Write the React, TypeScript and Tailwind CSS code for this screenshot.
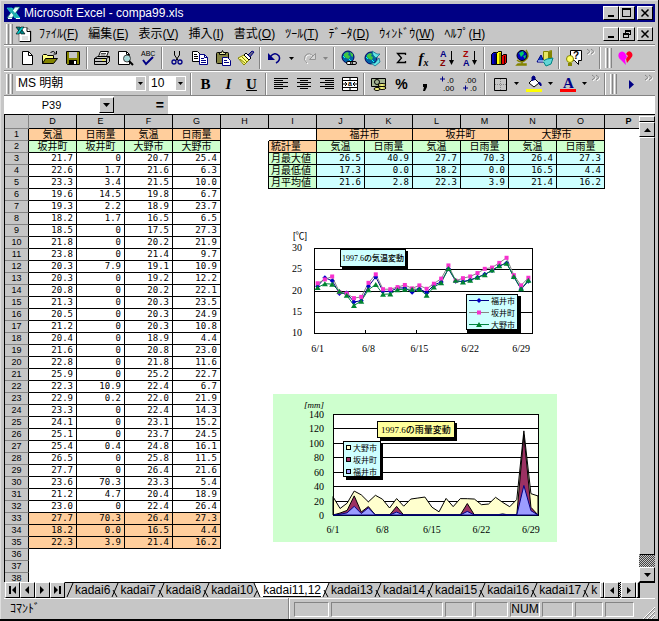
import type { ReactNode } from 'react';
import clsx from 'clsx';

const UI_FONT = "font-['Liberation_Sans','Noto_Sans_CJK_JP',sans-serif]";
const CELL_FONT = "font-['DejaVu_Sans_Mono','Noto_Sans_CJK_JP',monospace]";

const RAISED =
  'border border-t-white border-l-white border-r-black border-b-black bg-[#c6c6c6]';
const SUNKEN =
  'border border-t-[#848484] border-l-[#848484] border-r-white border-b-white';

/* ---------- data ---------- */

const COLUMNS = ['D', 'E', 'F', 'G', 'H', 'I', 'J', 'K', 'L', 'M', 'N', 'O', 'P'];

const DAILY: [string, string, string, string][] = [
  ['21.7', '0', '20.7', '25.4'],
  ['22.6', '1.7', '21.6', '6.3'],
  ['23.3', '3.4', '21.5', '10.0'],
  ['19.6', '14.5', '19.8', '6.7'],
  ['19.3', '2.2', '18.9', '23.7'],
  ['18.2', '1.7', '16.5', '6.5'],
  ['18.5', '0', '17.5', '27.3'],
  ['21.8', '0', '20.2', '21.9'],
  ['23.8', '0', '21.4', '9.7'],
  ['20.3', '7.9', '19.1', '10.9'],
  ['20.3', '0', '19.2', '12.2'],
  ['20.8', '0', '20.2', '22.1'],
  ['21.3', '0', '20.3', '23.5'],
  ['20.5', '0', '20.3', '24.9'],
  ['21.2', '0', '20.3', '10.8'],
  ['20.4', '0', '18.9', '4.4'],
  ['21.6', '0', '20.8', '23.0'],
  ['22.8', '0', '21.8', '11.6'],
  ['25.9', '0', '25.2', '22.7'],
  ['22.3', '10.9', '22.4', '6.7'],
  ['22.9', '0.2', '22.0', '21.9'],
  ['23.3', '0', '22.4', '14.3'],
  ['24.1', '0', '23.1', '15.2'],
  ['25.1', '0', '23.7', '24.5'],
  ['25.4', '0.4', '24.8', '16.1'],
  ['26.5', '0', '25.8', '11.5'],
  ['27.7', '0', '26.4', '21.6'],
  ['23.6', '70.3', '23.3', '5.4'],
  ['21.2', '4.7', '20.4', '18.9'],
  ['23.0', '0', '22.4', '26.4']
];

const SUMMARY = [
  ['27.7', '70.3', '26.4', '27.3'],
  ['18.2', '0.0', '16.5', '4.4'],
  ['22.3', '3.9', '21.4', '16.2']
];

const STATS = [
  ['月最大値', '26.5', '40.9', '27.7', '70.3', '26.4', '27.3'],
  ['月最低値', '17.3', '0.0', '18.2', '0.0', '16.5', '4.4'],
  ['月平均値', '21.6', '2.8', '22.3', '3.9', '21.4', '16.2']
];

const FUKUI_TEMP = [
  21, 23, 22.3, 19.3, 19.4, 17.3, 17.6, 21, 23.2, 19.8, 19.8, 20.6, 20.6, 19.6, 20.4,
  19.5, 21.3, 22, 25.1, 22.2, 22.1, 22.5, 23.1, 23.8, 24.7, 25.8, 26.5, 23.2, 20.3, 22.2
];
const FUKUI_RAIN = [
  0, 1, 3, 12, 2, 10, 0, 0, 0, 4, 0, 0, 0, 0, 0, 0, 0, 0, 0, 5, 0, 0, 0, 0, 1, 0, 0, 40.9, 6, 0
];

const column = (i: number) => DAILY.map((row) => Number(row[i]));

const MENUS = [
  ['ﾌｧｲﾙ', 'F'],
  ['編集', 'E'],
  ['表示', 'V'],
  ['挿入', 'I'],
  ['書式', 'O'],
  ['ﾂｰﾙ', 'T'],
  ['ﾃﾞｰﾀ', 'D'],
  ['ｳｨﾝﾄﾞｳ', 'W'],
  ['ﾍﾙﾌﾟ', 'H']
];

/* ---------- small pieces ---------- */

function Icon({ children, w = 18, h = 18 }: { children: ReactNode; w?: number; h?: number }) {
  return (
    <svg width={w} height={h} viewBox={`0 0 ${w} ${h}`} className="shrink-0" aria-hidden="true">
      {children}
    </svg>
  );
}

function Tool({ label, children }: { label: string; children: ReactNode }) {
  return (
    <button
      type="button"
      aria-label={label}
      className="flex h-[22px] w-[23px] shrink-0 items-center justify-center"
    >
      {children}
    </button>
  );
}

function DropArrow({ label, dim }: { label: string; dim?: boolean }) {
  return (
    <button
      type="button"
      aria-label={label}
      className="flex h-[22px] w-[11px] shrink-0 items-center justify-center"
    >
      <Icon w={5} h={3}>
        <path d="M0 0h5L2.5 3z" fill={dim ? '#848484' : '#000'} />
      </Icon>
    </button>
  );
}

function Sep() {
  return (
    <span className="mx-[2px] h-[22px] w-[2px] shrink-0 border-r border-l border-l-[#848484] border-r-white" />
  );
}

function Handle() {
  return (
    <span className="mx-[2px] flex h-5 shrink-0 gap-px">
      <span className="w-[3px] border-r border-l border-l-white border-r-[#848484]" />
      <span className="w-[3px] border-r border-l border-l-white border-r-[#848484]" />
    </span>
  );
}

function More() {
  return (
    <button
      type="button"
      aria-label="その他のボタン"
      className="flex h-[22px] w-3 shrink-0 items-start justify-center pt-px"
    >
      <Icon w={10} h={7}>
        <path d="M1 1l3 2.500-3 2.500M5 1l3 2.500-3 2.500" fill="none" stroke="#fff" transform="translate(1 1)" />
        <path d="M1 1l3 2.500-3 2.500M5 1l3 2.500-3 2.500" fill="none" stroke="#848484" />
      </Icon>
    </button>
  );
}

function WindowButtons({ restore }: { restore?: boolean }) {
  const button = clsx(RAISED, 'flex h-[14px] w-4 items-center justify-center');
  return (
    <div className="flex shrink-0">
      <button type="button" aria-label="最小化" className={button}>
        <Icon w={10} h={10}>
          <path d="M2 7h6v2H2z" />
        </Icon>
      </button>
      <button type="button" aria-label="元のサイズに戻す" className={button}>
        <Icon w={10} h={10}>
          {restore ? (
            <path
              d="M3 1h6v5H7v3H1V4h2zM4 3v1h3v1h1V3zM2 6v2h4V6z"
              fillRule="evenodd"
              shapeRendering="crispEdges"
            />
          ) : (
            <path d="M0 0h9v9H0zM1 2v6h7V2z" fillRule="evenodd" shapeRendering="crispEdges" />
          )}
        </Icon>
      </button>
      <button type="button" aria-label="閉じる" className={clsx(button, 'ml-[2px]')}>
        <Icon w={10} h={10}>
          <path d="M1.500 1.500l7 7m0-7l-7 7" stroke="#000" strokeWidth="1.500" />
        </Icon>
      </button>
    </div>
  );
}

function ExcelMark() {
  return (
    <Icon w={15} h={14}>
      <path d="M1 2h5l8 10H9z" fill="#31bdb5" stroke="#0ff" strokeWidth=".6" />
      <path d="M14 1H9L1 12h5z" fill="#e7ffff" stroke="#006363" strokeWidth=".8" />
      <path d="M1 2h4l8 10h-3z" fill="#21adad" />
      <path d="M2 12.500h4M10 12.500h4" stroke="#fff" />
    </Icon>
  );
}

function BookIcon() {
  return (
    <Icon w={17} h={16}>
      <path d="M4 1.500h8l4 4v10H4z" fill="#fff" stroke="#848484" />
      <path d="M12 1.500v4h4M15.500 6v9.500H5" fill="none" stroke="#000" />
      <path d="M1 1h4l5 7H6z" fill="#008484" stroke="#000" strokeWidth=".6" />
      <path d="M9 1H6L1 8h3z" fill="#0cc" stroke="#000" strokeWidth=".6" />
      <path d="M7 11h6M7 13h6" stroke="#c6c6c6" />
    </Icon>
  );
}

/* ---------- toolbars ---------- */

function Globe() {
  return (
    <>
      <circle cx="7" cy="7" r="6" fill="#0063a5" stroke="#000063" />
      <path d="M3 4l3-2 2 1-1 2 2 1-1 3-3-1-2-2zM9 2l3 2v3l-2-1z" fill="#42c642" />
      <path d="M2 6l2 2M8 9l2 2" stroke="#0ff" />
    </>
  );
}

function StandardToolbar() {
  return (
    <div className="flex h-[26px] items-center border-t border-b border-t-white border-b-[#848484]">
      <Handle />
      <Tool label="新規作成">
        <Icon>
          <path d="M4.500 2.500h6l4 4v9h-10z" fill="#fff" stroke="#000" />
          <path d="M10.500 2.500v4h4" fill="none" stroke="#000" />
        </Icon>
      </Tool>
      <Tool label="開く">
        <Icon>
          <path d="M1.500 14.500v-8l1-1h3l1 1h6v3" fill="#ffff84" stroke="#000" />
          <path d="M1.500 14.500l3-5h12l-4 5z" fill="#848400" stroke="#000" />
          <path d="M9.500 3.500q3-2.500 5 .5m1-2v3h-3" fill="none" stroke="#000" />
        </Icon>
      </Tool>
      <Tool label="上書き保存">
        <Icon>
          <path d="M2.500 2.500h13v13h-12l-1-1z" fill="#848400" stroke="#000" />
          <path d="M5 3h8v6H5z" fill="#c6c6c6" />
          <path d="M5 11h8v4H5z" />
          <path d="M10 12h2v3h-2z" fill="#fff" />
        </Icon>
      </Tool>
      <Sep />
      <Tool label="印刷">
        <Icon>
          <path d="M5.500 7.500l2-5h8l-2 5z" fill="#fff" stroke="#000" />
          <path d="M8 4.500h5M7.500 6h5" stroke="#000" strokeWidth=".7" />
          <path d="M1.500 9.500l3-2h12v5l-3 3h-12z" fill="#c6c6c6" stroke="#000" />
          <path d="M1.500 9.500h12v6m0-6l3-2M2 12.500h11" fill="none" stroke="#000" />
          <path d="M9 11h3" stroke="#ff0" />
        </Icon>
      </Tool>
      <Tool label="印刷プレビュー">
        <Icon>
          <path d="M2.500 2.500h8l3 3v10h-11z" fill="#fff" stroke="#000" />
          <path d="M10.500 2.500v3h3" fill="none" stroke="#000" />
          <circle cx="11" cy="9.500" r="3.500" fill="#a5d6d6" stroke="#424242" />
          <path d="M13 12l4 4" stroke="#000" strokeWidth="2" />
        </Icon>
      </Tool>
      <Tool label="スペルチェック">
        <Icon>
          <text x="2" y="7" fontSize="7" className="font-['Liberation_Sans',sans-serif]">
            ABC
          </text>
          <path d="M4 11l3 4 7-7" fill="none" stroke="#000084" strokeWidth="2" />
        </Icon>
      </Tool>
      <Sep />
      <Tool label="切り取り">
        <Icon>
          <path d="M6.500 2v4l4 6M11.500 2v4l-4 6" fill="none" stroke="#000" />
          <circle cx="6" cy="13" r="2" fill="none" stroke="#000084" strokeWidth="1.300" />
          <circle cx="12" cy="13" r="2" fill="none" stroke="#000084" strokeWidth="1.300" />
        </Icon>
      </Tool>
      <Tool label="コピー">
        <Icon>
          <path d="M1.500 2.500h5l3 3v7h-8z" fill="#fff" stroke="#000" />
          <path d="M3 5.500h3M3 7.500h4M3 9.500h4" stroke="#000" />
          <path d="M8.500 5.500h5l3 3v7h-8z" fill="#fff" stroke="#000084" />
          <path d="M13.500 5.500v3h3M10 9.500h3M10 11.500h5M10 13.500h5" fill="none" stroke="#000084" />
        </Icon>
      </Tool>
      <Tool label="貼り付け">
        <Icon>
          <rect x="2.500" y="3.500" width="12" height="11" rx="1" fill="#848442" stroke="#000" />
          <path d="M5.500 5.500v-2h2l1-2 1 2h2v2z" fill="#e7e7a5" stroke="#000" />
          <path d="M8.500 8.500h5l3 3v5h-8z" fill="#fff" stroke="#000084" />
          <path d="M10 11.500h3M10 13.500h5" stroke="#000084" />
        </Icon>
      </Tool>
      <Tool label="書式のコピー/貼り付け">
        <Icon>
          <path d="M1 9l6-3 5 5-5 5z" fill="#ffff84" stroke="#848400" />
          <path d="M3 10l5 4M5 8l5 5" stroke="#848400" />
          <path d="M7 6l2-2 5 5-2 2z" fill="#fff" stroke="#000" />
          <path d="M11 6l4-4 2 1-4 5z" fill="#636384" stroke="#000084" />
        </Icon>
      </Tool>
      <Sep />
      <Tool label="元に戻す">
        <Icon>
          <path d="M4 8q5-6 9-1 2 4-3 7" fill="none" stroke="#000084" strokeWidth="1.500" />
          <path d="M2 4v7h7z" fill="#000084" />
        </Icon>
      </Tool>
      <DropArrow label="元に戻す一覧" />
      <Tool label="やり直し">
        <Icon>
          <path d="M15 9q-5-6-9-1-2 4 2 7" fill="none" stroke="#fff" />
          <path d="M14 8q-5-6-9-1-2 4 2 7" fill="none" stroke="#949494" />
          <path d="M15.500 4.500v6h-6z" fill="#d6d6d6" stroke="#949494" />
        </Icon>
      </Tool>
      <DropArrow label="やり直し一覧" dim />
      <Sep />
      <Tool label="ハイパーリンクの挿入">
        <Icon>
          <g transform="translate(1 1)">
            <Globe />
          </g>
          <rect x="6.500" y="12.500" width="6" height="3" rx="1.500" fill="#fff" stroke="#000" />
          <rect x="10.500" y="12.500" width="6" height="3" rx="1.500" fill="none" stroke="#000" />
        </Icon>
      </Tool>
      <Tool label="Web ツールバー">
        <Icon>
          <g transform="translate(1 2)">
            <Globe />
          </g>
          <path d="M9 2l5 3h3l-4 4-3-3zM16 9l-4 5H8l4 3 5-4z" fill="#63e7e7" stroke="#006384" strokeWidth=".7" />
        </Icon>
      </Tool>
      <Sep />
      <Tool label="オート SUM">
        <Icon>
          <path d="M13.500 6V4.500h-8L9.500 9l-4 4.500h8V12M6 5l3.500 4" fill="none" stroke="#000" strokeWidth="1.300" />
        </Icon>
      </Tool>
      <Tool label="関数貼り付け">
        <span className="font-['Liberation_Serif',serif] text-[15px] leading-4 font-bold italic">
          f<sub className="text-[10px]">x</sub>
        </span>
      </Tool>
      <Tool label="昇順で並べ替え">
        <Icon>
          <text x="2" y="8" fontSize="9" fontWeight="bold" fill="#000084" fontFamily="Liberation Sans">
            A
          </text>
          <text x="2" y="17" fontSize="9" fontWeight="bold" fill="#840000" fontFamily="Liberation Sans">
            Z
          </text>
          <path d="M13.500 2v11" stroke="#000" />
          <path d="M11 11h5l-2.500 5z" />
        </Icon>
      </Tool>
      <Tool label="降順で並べ替え">
        <Icon>
          <text x="2" y="8" fontSize="9" fontWeight="bold" fill="#a50000" fontFamily="Liberation Sans">
            Z
          </text>
          <text x="2" y="17" fontSize="9" fontWeight="bold" fill="#000084" fontFamily="Liberation Sans">
            A
          </text>
          <path d="M13.500 2v11" stroke="#000" />
          <path d="M11 11h5l-2.500 5z" />
        </Icon>
      </Tool>
      <Sep />
      <Tool label="グラフ ウィザード">
        <Icon>
          <path d="M1.500 5.500l2-2h3v12h-5z" fill="#0000c6" stroke="#000" />
          <path d="M6.500 4.500l2-2h3v13h-5z" fill="#ff0" stroke="#000" />
          <path d="M11.500 7.500l2-2h3v8l-2 2h-3z" fill="#e70000" stroke="#000" />
          <path d="M5 5v10M10 4v11M14.500 7v8" stroke="#000" strokeWidth=".8" />
        </Icon>
      </Tool>
      <Tool label="マップ">
        <Icon>
          <path d="M13 1q5 7-2 11-4 2-7-1" fill="none" stroke="#848400" strokeWidth="1.500" />
          <circle cx="9" cy="6.500" r="5" fill="#0000c6" stroke="#000" />
          <path d="M6 4l4-2 1 3-3 3zM10 7l3-1-1 4z" fill="#0c6" />
          <path d="M9 13v2M4 16h9v-1H5z" stroke="#848400" strokeWidth="1.500" />
        </Icon>
      </Tool>
      <Tool label="図形描画">
        <Icon>
          <path d="M7.500 2.500h5l3-1v10h-8z" fill="#e7e763" stroke="#848400" />
          <path d="M12 3l3-1v8l-3 1z" fill="#848400" />
          <path d="M1 13l4-7 3 7z" fill="#0042c6" stroke="#000084" />
          <path d="M7 12l4-2 6-1-2 6-5 2z" fill="#63d6d6" stroke="#008484" />
          <path d="M2 12h6" stroke="#fff" />
        </Icon>
      </Tool>
      <Sep />
      <Tool label="Office アシスタント">
        <Icon>
          <path d="M5.500 1.500h11v10h-3v4l-4-4h-4z" fill="#fff" stroke="#000" />
          <text x="8" y="10" fontSize="10" fontWeight="bold" fontFamily="Liberation Sans">
            ?
          </text>
          <circle cx="5" cy="10" r="3.500" fill="#ffff63" stroke="#848400" />
          <path d="M3 14h4v3H3z" fill="#848400" />
        </Icon>
      </Tool>
      <More />
      <Sep />
      <Handle />
      <Tool label="ハート">
        <Icon>
          <path d="M8 4Q5 1 2 4q-2 4 2 7l5 5-1-5 2-3z" fill="#f0f" />
          <path d="M9 5q2-4 5-2 3 3 0 6l-4 5-1-4 2-3z" fill="#ff0021" />
        </Icon>
      </Tool>
    </div>
  );
}

function ComboBox({
  label,
  options,
  className
}: {
  label: string;
  options: string[];
  className: string;
}) {
  return (
    <label className={clsx('relative block h-[15px] shrink-0 bg-white', className)}>
      <select
        aria-label={label}
        className="block h-[15px] w-full appearance-none bg-white pl-[2px] text-[12px] leading-[15px]"
      >
        {options.map((o) => (
          <option key={o}>{o}</option>
        ))}
      </select>
      <span className="pointer-events-none absolute top-px right-px flex h-[13px] w-[9px] items-center justify-center bg-[#c6c6c6]">
        <Icon w={5} h={3}>
          <path d="M0 0h5L2.500 3z" />
        </Icon>
      </span>
    </label>
  );
}

const ALIGN_LINES = {
  left: 'M2 3.500h14M2 5.500h9M2 7.500h14M2 9.500h9M2 11.500h14M2 13.500h9',
  center: 'M2 3.500h14M5 5.500h8M2 7.500h14M5 9.500h8M2 11.500h14M5 13.500h8',
  right: 'M2 3.500h14M7 5.500h9M2 7.500h14M7 9.500h9M2 11.500h14M7 13.500h9'
};

function FormatToolbar() {
  const letter = "font-['Liberation_Serif',serif] text-[15px] leading-4 font-bold";
  return (
    <div className="flex h-6 items-center border-t border-t-white">
      <Handle />
      <ComboBox label="フォント" options={['MS 明朝', 'MS ゴシック']} className="ml-px w-[130px]" />
      <ComboBox label="フォント サイズ" options={['10', '11', '12']} className="mr-[2px] ml-[3px] w-[37px]" />
      <Sep />
      <Tool label="太字">
        <span className={letter}>B</span>
      </Tool>
      <Tool label="斜体">
        <span className={clsx(letter, 'italic')}>I</span>
      </Tool>
      <Tool label="下線">
        <span className={clsx(letter, 'underline')}>U</span>
      </Tool>
      <Sep />
      <Tool label="左揃え">
        <Icon>
          <path d={ALIGN_LINES.left} stroke="#000" />
        </Icon>
      </Tool>
      <Tool label="中央揃え">
        <Icon>
          <path d={ALIGN_LINES.center} stroke="#000" />
        </Icon>
      </Tool>
      <Tool label="右揃え">
        <Icon>
          <path d={ALIGN_LINES.right} stroke="#000" />
        </Icon>
      </Tool>
      <Tool label="セルを結合して中央揃え">
        <Icon>
          <path d="M1.500 2.500h15v13h-15zM1.500 5.500h15M1.500 12.500h15M9 3v2M9 13v2" fill="#fff" stroke="#000" />
          <path d="M2 9h4M12 9h4M4 7l2 2-2 2M14 7l-2 2 2 2" fill="none" stroke="#000" />
          <text x="7" y="11" fontSize="7" fontWeight="bold" fontFamily="Liberation Sans">
            a
          </text>
        </Icon>
      </Tool>
      <Sep />
      <Tool label="通貨スタイル">
        <Icon>
          <path d="M1.500 3.500h14v8h-14z" fill="#a5b594" stroke="#000" />
          <circle cx="7" cy="7" r="2.500" fill="none" stroke="#000" />
          <ellipse cx="12" cy="10" rx="4" ry="1.500" fill="#ffff84" stroke="#000" />
          <ellipse cx="12" cy="13" rx="4" ry="1.500" fill="#ffff84" stroke="#000" />
          <ellipse cx="7" cy="14" rx="3" ry="1.500" fill="#ffff84" stroke="#000" />
        </Icon>
      </Tool>
      <Tool label="パーセント スタイル">
        <span className="text-[14px] leading-4 font-bold">%</span>
      </Tool>
      <Tool label="桁区切りスタイル">
        <Icon>
          <path d="M7 9h4v3l-2 4H7l1-4H7z" />
        </Icon>
      </Tool>
      <Tool label="小数点表示桁上げ">
        <Icon>
          <path d="M1 4h5M3.500 1.500v5" stroke="#000084" />
          <text x="8" y="8" fontSize="8" fontFamily="Liberation Sans">
            .0
          </text>
          <text x="4" y="16" fontSize="8" fontFamily="Liberation Sans">
            .00
          </text>
        </Icon>
      </Tool>
      <Tool label="小数点表示桁下げ">
        <Icon>
          <text x="3" y="8" fontSize="8" fontFamily="Liberation Sans">
            .00
          </text>
          <path d="M1 13h5M3.500 10.500v5" stroke="#000084" />
          <text x="8" y="16" fontSize="8" fontFamily="Liberation Sans">
            .0
          </text>
        </Icon>
      </Tool>
      <Sep />
      <Tool label="罫線">
        <Icon>
          <path d="M3.500 3.500h12v12h-12z" fill="none" stroke="#000" />
          <path d="M9.500 4v11M4 9.500h11" stroke="#848484" strokeDasharray="1 1" />
        </Icon>
      </Tool>
      <DropArrow label="罫線一覧" />
      <Tool label="塗りつぶしの色">
        <Icon>
          <path d="M4 8l5-5 5 5-5 4z" fill="#fff" stroke="#000" />
          <path d="M7 6V2q2-2 3 0v3M14 7q3 1 2 4l-2-2z" fill="#000084" stroke="#000084" />
          <path d="M1 14h16v3H1z" fill="#ff0" />
        </Icon>
      </Tool>
      <DropArrow label="塗りつぶしの色一覧" />
      <Tool label="フォントの色">
        <Icon>
          <text
            x="4"
            y="13"
            fontSize="15"
            fontWeight="bold"
            fill="#000084"
            fontFamily="Liberation Serif"
          >
            A
          </text>
          <path d="M1 14h16v3H1z" fill="red" />
        </Icon>
      </Tool>
      <DropArrow label="フォントの色一覧" />
      <More />
      <Sep />
      <Handle />
      <Tool label="マクロの実行">
        <Icon>
          <path d="M7 5v9l5-4.500z" fill="#000084" />
        </Icon>
      </Tool>
      <span className="ml-auto">
        <More />
      </span>
    </div>
  );
}

function FormulaBar() {
  return (
    <div className="flex h-[19px] border-t border-t-[#848484]">
      <div className="flex w-[110px] shrink-0 bg-white">
        <input
          aria-label="名前ボックス"
          defaultValue="P39"
          className="h-[17px] w-full min-w-0 bg-white text-center text-[11px]"
        />
        <button
          type="button"
          aria-label="名前一覧"
          className={clsx(RAISED, 'my-px flex w-[15px] shrink-0 items-center justify-center')}
        >
          <Icon w={7} h={4}>
            <path d="M0 0h7L3.500 4z" />
          </Icon>
        </button>
      </div>
      <button
        type="button"
        aria-label="数式の編集"
        className="w-[54px] shrink-0 pr-1 text-right text-[14px] leading-4 font-bold"
      >
        =
      </button>
      <input aria-label="数式バー" className="h-full min-w-0 flex-1 bg-white px-1 text-[11px]" />
    </div>
  );
}

/* ---------- worksheet ---------- */

const GRID = 'border-r border-b border-black';
const PEACH = 'bg-[#ffce9c]';
const MINT = 'bg-[#ceffce]';
const AQUA = 'bg-[#ceffff]';

function Num({ children, fill }: { children: ReactNode; fill?: string }) {
  return <td className={clsx(GRID, fill, 'pr-[3px] text-right')}>{children}</td>;
}

function Label({
  children,
  fill,
  span,
  left
}: {
  children: ReactNode;
  fill: string;
  span?: number;
  left?: boolean;
}) {
  return (
    <td colSpan={span} className={clsx(GRID, fill, 'text-[10px]', left ? 'pl-[2px]' : 'text-center')}>
      {children}
    </td>
  );
}

function dailyCells(row: number) {
  if (row === 1) {
    return ['気温', '日雨量', '気温', '日雨量'].map((t, i) => (
      <Label key={i} fill={PEACH}>
        {t}
      </Label>
    ));
  }
  if (row === 2) {
    return ['坂井町', '坂井町', '大野市', '大野市'].map((t, i) => (
      <Label key={i} fill={MINT}>
        {t}
      </Label>
    ));
  }
  if (row <= 32) return DAILY[row - 3].map((v, i) => <Num key={i}>{v}</Num>);
  if (row <= 35) {
    return SUMMARY[row - 33].map((v, i) => (
      <Num key={i} fill={PEACH}>
        {v}
      </Num>
    ));
  }
  return <td colSpan={4} />;
}

function statCells(row: number) {
  if (row === 1) {
    return (
      <>
        <td />
        <td className={GRID} />
        {['福井市', '坂井町', '大野市'].map((t) => (
          <Label key={t} fill={PEACH} span={2}>
            {t}
          </Label>
        ))}
      </>
    );
  }
  if (row === 2) {
    return (
      <>
        <td className="border-r border-black" />
        <Label fill={PEACH} left>
          統計量
        </Label>
        {['気温', '日雨量', '気温', '日雨量', '気温', '日雨量'].map((t, i) => (
          <Label key={i} fill={MINT}>
            {t}
          </Label>
        ))}
      </>
    );
  }
  if (row <= 5) {
    const [name, ...values] = STATS[row - 3];
    return (
      <>
        <td className="border-r border-black" />
        <Label fill={MINT} left>
          {name}
        </Label>
        {values.map((v, i) => (
          <Num key={i} fill={AQUA}>
            {v}
          </Num>
        ))}
      </>
    );
  }
  return <td colSpan={8} />;
}

function Sheet() {
  const rows = Array.from({ length: 38 }, (_, i) => i + 1);
  return (
    <table
      className={clsx(
        CELL_FONT,
        'w-[648px] table-fixed border-separate border-spacing-0 text-[9px] leading-[11px]'
      )}
    >
      <colgroup>
        <col className="w-6" />
        {COLUMNS.map((c) => (
          <col key={c} className="w-12" />
        ))}
      </colgroup>
      <thead className={UI_FONT}>
        <tr className="h-[15px]">
          <th className="border-t border-r border-b border-t-black border-r-[#848484] border-b-[#848484] bg-[#c6c6c6]" />
          {COLUMNS.map((c) => (
            <th
              key={c}
              className={clsx(
                'border-t border-r border-b border-black bg-[#c6c6c6] p-0',
                c === 'P' ? 'font-bold' : 'font-normal'
              )}
            >
              {c}
            </th>
          ))}
        </tr>
      </thead>
      <tbody>
        {rows.map((row) => (
          <tr key={row} className="h-3 whitespace-nowrap">
            <th
              className={clsx(
                UI_FONT,
                'border-r border-b border-r-black border-b-[#848484] bg-[#c6c6c6] p-0 text-[9px] font-normal'
              )}
            >
              {row}
            </th>
            {dailyCells(row)}
            {statCells(row)}
            <td />
          </tr>
        ))}
      </tbody>
    </table>
  );
}

/* ---------- charts ---------- */

const DATES = ['6/1', '6/8', '6/15', '6/22', '6/29'];
const CHART_FONT = 'Liberation Serif, Noto Sans CJK JP, serif';

function TempChart() {
  const left = 29;
  const top = 23;
  const width = 218;
  const height = 85;
  const x = (i: number) => left + ((i + 0.5) * width) / 30;
  const y = (v: number) => top + ((30 - v) * height) / 20;

  const line = (values: number[]) => values.map((v, i) => `${x(i)},${y(v)}`).join(' ');
  const diamond = (cx: number, cy: number) => `M${cx} ${cy - 2.5}l2.500 2.500-2.500 2.500-2.500-2.500z`;
  const triangle = (cx: number, cy: number) => `M${cx} ${cy - 2.5}l3 5h-6z`;

  const sakai = column(0);
  const ono = column(2);

  return (
    <svg
      width="265"
      height="135"
      viewBox="0 0 265 135"
      fontFamily={CHART_FONT}
      fontSize="10"
      className="absolute top-[111px] left-[280px]"
      role="img"
      aria-label="1997.6の気温変動"
    >
      <text x="8" y="14" fontSize="9" fontFamily="Liberation Sans, Noto Sans CJK JP">
        [℃]
      </text>
      {[30, 25, 20, 15, 10].map((v) => (
        <g key={v}>
          <path d={`M${left} ${Math.round(y(v)) + 0.5}h${width}`} stroke="#000" />
          <text x="17" y={y(v) + 3} textAnchor="end">
            {v}
          </text>
        </g>
      ))}
      <path
        d={`M${left + 0.5} ${top}v${height}M${left + width + 0.5} ${top}v${height + 1}`}
        stroke="#000"
      />
      {DATES.map((d, i) => (
        <g key={d}>
          <path d={`M${left + Math.round((i * 7 * width) / 30) + 0.5} ${top + height}v-3`} stroke="#000" />
          <text x={x(i * 7)} y="127" textAnchor="middle">
            {d}
          </text>
        </g>
      ))}

      <polyline points={line(FUKUI_TEMP)} fill="none" stroke="#000084" />
      <polyline points={line(sakai)} fill="none" stroke="#848484" />
      <polyline points={line(ono)} fill="none" stroke="#008442" />
      {FUKUI_TEMP.map((v, i) => (
        <path key={i} d={diamond(x(i), y(v))} fill="#0000c6" />
      ))}
      {sakai.map((v, i) => (
        <rect key={i} x={x(i) - 2} y={y(v) - 2} width="4" height="4" fill="#f731ce" />
      ))}
      {ono.map((v, i) => (
        <path key={i} d={triangle(x(i), y(v))} fill="#008431" />
      ))}

      <rect x="57" y="26" width="66" height="18" />
      <rect x="55.500" y="24.500" width="65" height="17" fill="#ceffff" stroke="#000" />
      <text x="88" y="36" textAnchor="middle" fontSize="8" fontWeight="500">
        1997.6の気温変動
      </text>

      <rect x="183" y="71" width="53" height="37" />
      <rect x="181.500" y="69.500" width="51" height="35" fill="#ceffff" stroke="#000" />
      {['福井市', '坂井町', '大野市'].map((name, i) => (
        <g key={name}>
          <path
            d={`M184 ${75.5 + i * 12}h20`}
            stroke={['#000084', '#848484', '#008442'][i]}
          />
          {i === 0 && <path d={diamond(194, 75.5)} fill="#0000c6" />}
          {i === 1 && <rect x="192" y="85.500" width="4" height="4" fill="#f731ce" />}
          {i === 2 && <path d={triangle(194, 99.5)} fill="#008431" />}
          <text x="206" y={79 + i * 12} fontSize="8">
            {name}
          </text>
        </g>
      ))}
    </svg>
  );
}

function RainChart() {
  const left = 60;
  const top = 20;
  const width = 205;
  const height = 101;
  const x = (i: number) => left + (i * width) / 29;
  const y = (v: number) => top + height - (v * height) / 140;

  const sakai = column(1).map((v, i) => v + FUKUI_RAIN[i]);
  const ono = column(3).map((v, i) => v + sakai[i]);
  const area = (values: number[]) =>
    `M${left} ${y(0)}${values.map((v, i) => `L${x(i)} ${y(v)}`).join('')}L${left + width} ${y(0)}z`;

  return (
    <svg
      width="284"
      height="148"
      viewBox="0 0 284 148"
      fontFamily={CHART_FONT}
      fontSize="10"
      className="absolute top-[280px] left-[268px] bg-[#ceffce]"
      role="img"
      aria-label="1997.6の雨量変動"
    >
      <text x="31" y="14" fontSize="9" fontStyle="italic">
        [mm]
      </text>
      <rect x={left} y={top} width={width} height={height} fill="#fff" />
      {[140, 120, 100, 80, 60, 40, 20, 0].map((v) => (
        <g key={v}>
          <path d={`M${left} ${Math.round(y(v)) + 0.5}h${width}`} stroke="#000" />
          <text x="51" y={y(v) + 4} textAnchor="end">
            {v}
          </text>
        </g>
      ))}
      <path d={area(ono)} fill="#ffffce" stroke="#000" />
      <path d={area(sakai)} fill="#9c3163" stroke="#000" />
      <path d={area(FUKUI_RAIN)} fill="#9c9cff" stroke="#000084" />
      <path d={`M${left + 0.5} ${top}v${height}M${left + width + 0.5} ${top}v${height + 1}`} stroke="#000" />
      {DATES.map((d, i) => (
        <text key={d} x={x(i * 7)} y="139" textAnchor="middle">
          {d}
        </text>
      ))}

      <rect x="107" y="29" width="77" height="18" />
      <rect x="104.500" y="27.500" width="77" height="16" fill="#ffff9c" stroke="#000" />
      <text x="143" y="39" textAnchor="middle" fontSize="9" fontWeight="500">
        1997.6の雨量変動
      </text>

      <rect x="73" y="49" width="37" height="37" />
      <rect x="70.500" y="47.500" width="37" height="35" fill="#ceffff" stroke="#000" />
      {['大野市', '坂井町', '福井市'].map((name, i) => (
        <g key={name}>
          <rect
            x="73.500"
            y={51.5 + i * 12}
            width="4"
            height="4"
            fill={['#ffffce', '#9c3163', '#9c9cff'][i]}
            stroke="#000"
          />
          <text x="80" y={57 + i * 12} fontSize="8">
            {name}
          </text>
        </g>
      ))}
    </svg>
  );
}

/* ---------- scroll bars, tabs, status ---------- */

function VerticalScroll() {
  const arrow = clsx(RAISED, 'flex h-[15px] shrink-0 items-center justify-center');
  return (
    <div className="flex w-4 shrink-0 flex-col border-t border-t-black bg-[#c6c6c6]">
      <span className={clsx(RAISED, 'mt-px h-[6px] shrink-0')} />
      <button type="button" aria-label="上へスクロール" className={arrow}>
        <Icon w={7} h={4}>
          <path d="M0 4h7L3.500 0z" />
        </Icon>
      </button>
      <span className={clsx(RAISED, 'flex-1')} />
      <span className="h-3 shrink-0 bg-[repeating-conic-gradient(#424242_0_25%,#c6c6c6_0_50%)] bg-[length:2px_2px]" />
      <button type="button" aria-label="下へスクロール" className={arrow}>
        <Icon w={7} h={4}>
          <path d="M0 0h7L3.500 4z" />
        </Icon>
      </button>
    </div>
  );
}

const TABS = [
  'kadai6',
  'kadai7',
  'kadai8',
  'kadai10',
  'kadai11,12',
  'kadai13',
  'kadai14',
  'kadai15',
  'kadai16',
  'kadai17',
  'k'
];
const ACTIVE_TAB = 4;

const NAV = [
  { label: '先頭のシート', d: 'M1 0h2v8H1zM8 0v8L4 4z' },
  { label: '前のシート', d: 'M6 0v8L2 4z' },
  { label: '次のシート', d: 'M2 0v8l4-4z' },
  { label: '最後のシート', d: 'M6 0h2v8H6zM1 0v8l4-4z' }
];

function TabEdge({ index }: { index: number }) {
  // the edge sits to the left of the tab with this index
  const afterActive = index === ACTIVE_TAB + 1;
  const beforeActive = index === ACTIVE_TAB;
  return (
    <svg width="10" height="15" viewBox="0 0 10 15" className="shrink-0" aria-hidden="true">
      {afterActive && <path d="M0 0h8L2 14H0z" fill="#fff" />}
      {beforeActive && <path d="M1 0h9v14H7z" fill="#fff" />}
      {beforeActive ? (
        <path d="M1 0l6 14M1 14l3-6" stroke="#000" fill="none" />
      ) : (
        <path d={index === 0 ? 'M8 0L2 14' : 'M8 0L2 14M3 7l4 7'} stroke="#000" fill="none" />
      )}
    </svg>
  );
}

function SheetTabs() {
  return (
    <div className="flex h-[17px] shrink-0 border-b border-b-white bg-[#c6c6c6]">
      <div className="flex shrink-0 pl-px">
        {NAV.map((n) => (
          <button
            key={n.label}
            type="button"
            aria-label={n.label}
            className={clsx(RAISED, 'flex h-4 w-[15px] items-center justify-center')}
          >
            <Icon w={9} h={8}>
              <path d={n.d} />
            </Icon>
          </button>
        ))}
      </div>
      <div className="flex min-w-0 flex-1 overflow-hidden border-t border-black text-[12px] leading-[14px]">
        {TABS.map((name, i) => (
          <div key={name} className="flex shrink-0">
            <TabEdge index={i} />
            <button
              type="button"
              className={clsx('h-[14px]', i === ACTIVE_TAB && 'border-b border-black bg-white')}
            >
              {name}
            </button>
          </div>
        ))}
      </div>
      <div className="flex w-[55px] shrink-0">
        <span className={clsx(RAISED, 'w-1')} />
        <button
          type="button"
          aria-label="左へスクロール"
          className={clsx(RAISED, 'flex w-[15px] items-center justify-center')}
        >
          <Icon w={4} h={7}>
            <path d="M4 0v7L0 3.500z" />
          </Icon>
        </button>
        <span className="w-[2px] bg-[repeating-conic-gradient(#000_0_25%,#c6c6c6_0_50%)] bg-[length:2px_2px]" />
        <button
          type="button"
          aria-label="右へスクロール"
          className={clsx(RAISED, 'flex w-[15px] items-center justify-center')}
        >
          <Icon w={4} h={7}>
            <path d="M0 0v7l4-3.500z" />
          </Icon>
        </button>
        <span className={clsx(RAISED, 'w-[3px]')} />
        <span className="flex-1 border-t border-l border-black" />
      </div>
    </div>
  );
}

function StatusBar() {
  const box = clsx(SUNKEN, 'h-[15px] shrink-0');
  return (
    <div className="flex h-5 shrink-0 items-center gap-[2px] text-[12px] leading-[14px]">
      <span className="min-w-0 flex-1 pl-[6px]">ｺﾏﾝﾄﾞ</span>
      <Sep />
      <span className={clsx(box, 'w-[35px]')} />
      <span className={clsx(box, 'w-[112px]')} />
      <span className={clsx(box, 'w-7')} />
      <span className={clsx(box, 'w-[33px]')} />
      <span className={clsx(box, 'w-[30px] text-center leading-[13px]')}>NUM</span>
      <span className={clsx(box, 'w-[31px]')} />
      <span className={clsx(box, 'w-7')} />
      <span className={clsx(box, 'w-[29px]')} />
      <span className="flex w-[19px] shrink-0 justify-end self-end">
        <Icon w={12} h={12}>
          <path d="M0 12L12 0M4 12l8-8M8 12l4-4" stroke="#fff" />
          <path d="M1 12L12 1M5 12l7-7M9 12l3-3" stroke="#848484" />
        </Icon>
      </span>
    </div>
  );
}

export default function App() {
  return (
    <div
      className={clsx(
        UI_FONT,
        'flex h-screen w-full flex-col overflow-hidden border-r border-b-2 border-black bg-[#c6c6c6] text-black'
      )}
    >
      <div className="flex min-h-0 flex-1 flex-col border-t border-l border-[#dedede] pt-[3px] pr-[3px] pl-[3px]">
        <header className="flex h-[18px] shrink-0 items-center gap-[3px] bg-[#000084] px-[2px] text-white">
          <ExcelMark />
          <h1 className="flex-1 truncate text-[12px] leading-4">Microsoft Excel - compa99.xls</h1>
          <WindowButtons />
        </header>

        <nav className="mt-px flex h-[22px] shrink-0 items-center border-b border-b-[#848484] pr-[2px]">
          <Handle />
          <BookIcon />
          <div className="ml-[7px] flex flex-1 gap-[10px] text-[12px] leading-4 whitespace-nowrap">
            {MENUS.map(([name, key]) => (
              <button key={key} type="button">
                {name}(<span className="underline">{key}</span>)
              </button>
            ))}
          </div>
          <WindowButtons restore />
        </nav>

        <StandardToolbar />
        <FormatToolbar />
        <FormulaBar />

        <main className="flex min-h-0 flex-1 border-l border-l-black">
          <div className="relative min-w-0 flex-1 overflow-hidden bg-white">
            <Sheet />
            <TempChart />
            <RainChart />
          </div>
          <VerticalScroll />
        </main>

        <SheetTabs />
        <StatusBar />
      </div>
    </div>
  );
}
